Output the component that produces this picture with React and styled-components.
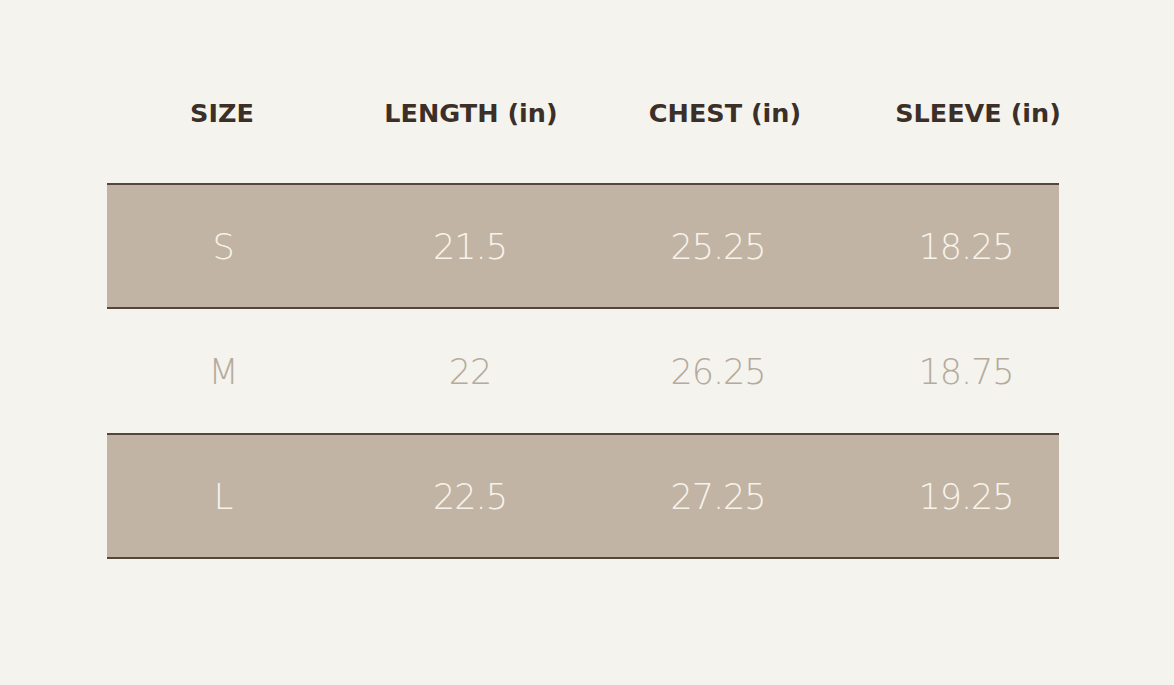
import React from "react";
import styled, { createGlobalStyle } from "styled-components";

const GlobalStyle = createGlobalStyle`
  html, body {
    margin: 0;
    padding: 0;
    background: #f4f3ee;
  }
`;

const Page = styled.div`
  width: 1174px;
  height: 685px;
  background: #f4f3ee;
  padding: 70px 0 0 107px;
  box-sizing: border-box;
  overflow: hidden;
`;

const Table = styled.div`
  width: 952px;
  display: flex;
  flex-direction: column;
`;

const HeadRow = styled.div`
  display: grid;
  grid-template-columns: 230px 268px 240px 266px;
  height: 86px;
  align-items: center;
  margin-bottom: 27px;
`;

const HeadCell = styled.div`
  text-align: center;
  font-family: "DejaVu Sans", sans-serif;
  font-weight: 700;
  font-size: 25.5px;
  color: #3b2f27;
  white-space: nowrap;
`;

const Row = styled.div`
  display: grid;
  grid-template-columns: 232px 262px 234px 262px;
  height: 126px;
  box-sizing: border-box;
  align-items: center;
  background: ${props => (props.shaded ? "#c1b4a4" : "transparent")};
  border-top: ${props => (props.shaded ? "2px solid #54463b" : "none")};
  border-bottom: ${props => (props.shaded ? "2px solid #54463b" : "none")};
  margin: ${props => (props.shaded ? "0" : "-1px 0")};
  overflow: visible;
`;

const Cell = styled.div`
  text-align: center;
  font-family: "DejaVu Sans", sans-serif;
  font-weight: 200;
  font-size: 35px;
  letter-spacing: -1px;
  padding-top: 2px;
  color: ${props => (props.shaded ? "#f7f3eb" : "#b5aa9c")};
  white-space: nowrap;
`;

const headers = ["SIZE", "LENGTH (in)", "CHEST (in)", "SLEEVE (in)"];

const rows = [
  ["S", "21.5", "25.25", "18.25"],
  ["M", "22", "26.25", "18.75"],
  ["L", "22.5", "27.25", "19.25"]
];

export default function App() {
  return (
    <>
      <GlobalStyle />
      <Page>
        <Table>
          <HeadRow>
            {headers.map(h => (
              <HeadCell key={h}>{h}</HeadCell>
            ))}
          </HeadRow>
          {rows.map((r, i) => {
            const shaded = i % 2 === 0;
            return (
              <Row key={r[0]} shaded={shaded}>
                {r.map((v, j) => (
                  <Cell key={j} shaded={shaded}>
                    {v}
                  </Cell>
                ))}
              </Row>
            );
          })}
        </Table>
      </Page>
    </>
  );
}
